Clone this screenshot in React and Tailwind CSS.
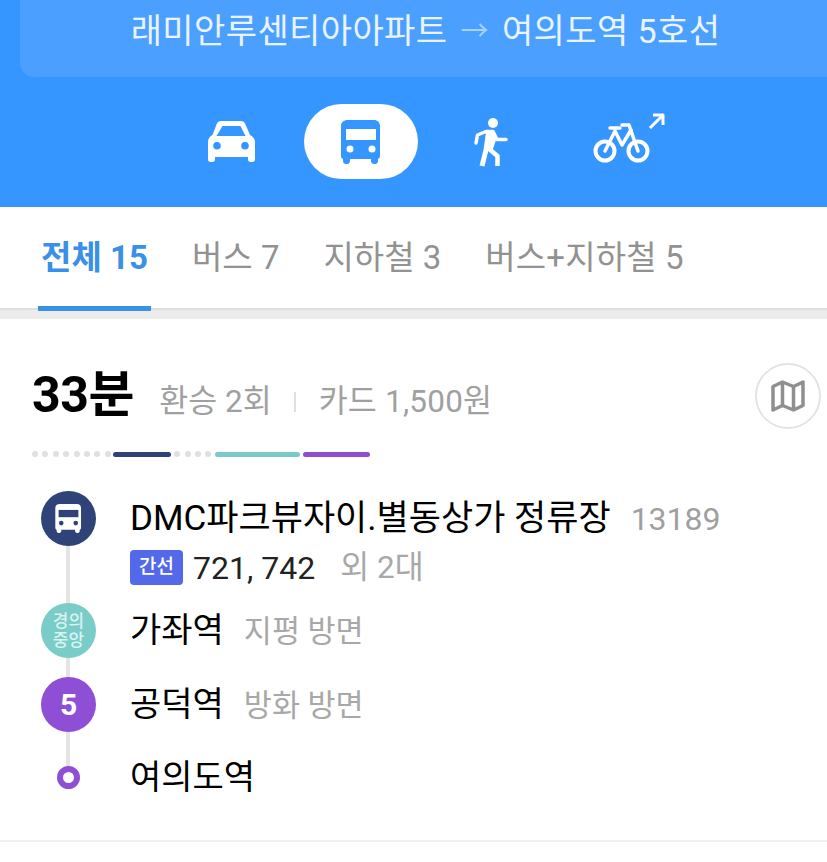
import React from "react";

function Car() {
  return (
    <svg width="48" height="41" viewBox="0 0 48 41" className="block">
      <path fillRule="evenodd" fill="#fff" d="M14 0h20c2 0 3.500 1 4.300 3l4.700 11c3 1.500 5 4 5 7v17c0 1.700-1 3-2.500 3h-2c-1.500 0-2.500-1.300-2.500-3v-2H8v2c0 1.700-1 3-2.500 3h-2C2 41 1 39.700 1 38V21c0-3 1.500-5.500 4.500-7L9.700 3C10.500 1 12 0 14 0zM15.500 5 9.500 15h29l-5-10zM10 21a3.800 3.800 0 1 0 0 7.600 3.800 3.800 0 0 0 0-7.600zM38 21a3.800 3.800 0 1 0 0 7.600 3.800 3.800 0 0 0 0-7.600z" />
    </svg>
  );
}
function Bus({ color = "#3596ff", hole = "#fff", w = 40, h = 44 }) {
  return (
    <svg width={w} height={h} viewBox="0 0 40 44" className="block">
      <path fill={color} d="M7 0h26c3.500 0 6 2.500 6 6v30c0 1.500-.7 2.500-2 3v2c0 1.500-1 3-3 3h-1c-2 0-3-1.500-3-3v-2H9v2c0 1.500-1 3-3 3H5c-2 0-3-1.500-3-3v-2c-1.300-.5-2-1.500-2-3V6c0-3.500 2.500-6 7-6z" />
      <rect x="5" y="9" width="30" height="11" fill={hole} />
      <circle cx="9" cy="29" r="3.500" fill={hole} />
      <circle cx="31" cy="29" r="3.500" fill={hole} />
    </svg>
  );
}
function Walk() {
  return (
    <svg width="36" height="50" viewBox="0 0 36 50" className="block" fill="none" stroke="#fff" strokeWidth="3.500" strokeLinejoin="round" strokeLinecap="round">
      <circle cx="20" cy="6" r="5" fill="#fff" stroke="none" />
      <path d="M3 26 4.500 18 13 14.500H20L24 22.500H33" />
      <path d="M15.500 16 13 33 9 49" strokeWidth="5" strokeLinecap="butt" />
      <path d="M15 31 24.500 39V49" strokeWidth="4.500" strokeLinecap="butt" />
      <path d="M13 15h8l2 8-3 9-8-1z" fill="#fff" stroke="none" />
    </svg>
  );
}
function Bike() {
  return (
    <svg width="72" height="52" viewBox="0 0 72 52" className="block" fill="none" stroke="#fff" strokeWidth="3.500" strokeLinecap="round" strokeLinejoin="round">
      <circle cx="12" cy="38" r="9.500" strokeWidth="4" />
      <circle cx="45" cy="38" r="9.500" strokeWidth="4" />
      <path d="M12 38 22 18 29 32 38 17" />
      <path d="M17 15h10" />
      <path d="M29 12h7L45 38" />
      <path d="M57 15 70 2M60 2h10v10" strokeWidth="3" strokeLinecap="butt" />
    </svg>
  );
}
function MapIcon() {
  return (
    <svg width="34" height="32" viewBox="0 0 34 32" className="block" fill="none" stroke="#8f8f8f" strokeWidth="3.500" strokeLinejoin="round">
      <path d="M2 6.500 11.500 2 22.500 6.500 32 2V25.500L22.500 30 11.500 25.500 2 30z" />
      <path d="M11.500 2V25.500M22.500 6.500V30" />
    </svg>
  );
}

const dots = (n) => Array.from({ length: n }, (_, i) => (
  <span key={i} className="w-[6px] h-[6px] rounded-full bg-[#e0e0e0] mr-[4.400px] shrink-0" />
));

export default function App() {
  return (
    <div className="w-[827px] h-[862px] overflow-hidden bg-white" style={{ fontFamily: "Roboto, 'Noto Sans CJK KR', sans-serif" }}>
      {/* header */}
      <div className="h-[207px] bg-[#3596ff] pl-[20px]">
        <div className="h-[77px] bg-[#4a9fff] rounded-bl-[14px] flex items-center justify-center pb-[14px] pl-[4px] text-[34px] tracking-[0.4px] text-[#eaf4ff]">
          <span>래미안루센티아아파트</span>
          <span className="mx-[13px] text-[28px] text-[#a9d0ff]">→</span>
          <span>여의도역 5호선</span>
        </div>
        <div className="flex items-center ml-[-20px] mt-[27px] h-[75px]">
          <div className="ml-[207px] w-[48px]"><Car /></div>
          <div className="ml-[49px] w-[114px] h-[75px] rounded-[38px] bg-white flex items-center justify-center"><Bus /></div>
          <div className="ml-[55px] w-[36px]"><Walk /></div>
          <div className="ml-[84px] mt-[-5px] w-[72px]"><Bike /></div>
        </div>
      </div>

      {/* tabs */}
      <div className="h-[101px] flex items-center pl-[38px] text-[33px] text-[#929292]">
        <span className="font-bold text-[#3a8fe6] w-[113px] text-center mr-[41px]">전체 15</span>
        <span className="mr-[44px]">버스 7</span>
        <span className="mr-[44px]">지하철 3</span>
        <span className="tracking-[0.15px]">버스+지하철 5</span>
      </div>
      <div className="h-[11px] bg-[#ececec] border-t-[2px] border-[#dedede] relative">
        <div className="absolute left-[38px] top-[-4px] w-[113px] h-[5px] bg-[#3a8fe6]" />
      </div>

      {/* card */}
      <div className="pl-[32px] pt-[44px]">
        <div className="flex items-center justify-between h-[66px] pr-[6px]">
          <div className="flex items-baseline mt-[-2px]">
            <span className="text-[50px] font-bold text-black tracking-[-0.4px]">33분</span>
            <span className="ml-[25px] text-[31.500px] text-[#a0a0a0]">환승 2회</span>
            <span className="mx-[22px] w-[2px] h-[20px] bg-[#e0e0e0]" />
            <span className="ml-[1px] text-[31.500px] tracking-[0.2px] text-[#a0a0a0]">카드 1,500원</span>
          </div>
          <div className="w-[66px] h-[66px] rounded-full border-2 border-[#e4e4e4] flex items-center justify-center"><MapIcon /></div>
        </div>
        <div className="flex items-center mt-[22px] h-[6px]">
          {dots(8)}
          <span className="w-[58px] h-[5px] rounded-full bg-[#2f4379] mr-[3px] ml-[-2px]" />
          {dots(4)}
          <span className="w-[85px] h-[5px] rounded-full bg-[#7cc9c9] mr-[3px] ml-[-1px]" />
          <span className="w-[67px] h-[5px] rounded-full bg-[#8e4fcf]" />
        </div>
      </div>

      {/* timeline */}
      <div className="relative pl-[41px] mt-[34px]">
        <div className="absolute left-[66px] top-[28px] w-[4px] h-[260px] bg-[#e4e4e4]" />
        <div className="relative flex h-[112px]">
          <div className="w-[55px] h-[55px] rounded-full bg-[#2f4379] flex items-center justify-center"><Bus color="#fff" hole="#2f4379" w={27} h={29} /></div>
          <div className="ml-[34px]">
            <div className="flex items-baseline h-[56px] pt-[2px]">
              <span className="text-[35px] text-black">DMC파크뷰자이.별동상가 정류장</span>
              <span className="ml-[20px] text-[32px] text-[#a0a0a0]">13189</span>
            </div>
            <div className="flex items-center h-[35px] mt-[3px]">
              <span className="w-[53px] h-[35px] rounded-[4px] bg-[#5468ea] text-white text-[19px] font-medium flex items-center justify-center">간선</span>
              <span className="ml-[10px] text-[32px] text-[#222]">721, 742</span>
              <span className="ml-[25px] text-[31.500px] text-[#a8a8a8]">외 2대</span>
            </div>
          </div>
        </div>
        <div className="relative flex h-[74px]">
          <div className="w-[55px] h-[55px] rounded-full bg-[#7accc9] text-[#d9f3f1] text-[17px] leading-[19px] font-medium flex items-center justify-center text-center">경의<br />중앙</div>
          <div className="ml-[34px] flex items-baseline h-[55px] pt-[2px]">
            <span className="text-[34px] text-black">가좌역</span>
            <span className="ml-[20px] text-[30.500px] text-[#a8a8a8]">지평 방면</span>
          </div>
        </div>
        <div className="relative flex h-[89px]">
          <div className="w-[55px] h-[55px] rounded-full bg-[#8e4fd6] text-white text-[30px] font-bold flex items-center justify-center">5</div>
          <div className="ml-[34px] flex items-baseline h-[55px] pt-[2px]">
            <span className="text-[34px] text-black">공덕역</span>
            <span className="ml-[20px] text-[30.500px] text-[#a8a8a8]">방화 방면</span>
          </div>
        </div>
        <div className="relative flex h-[74px] items-start">
          <div className="w-[55px] flex justify-center"><div className="w-[23px] h-[23px] rounded-full border-[6.500px] border-[#8e4fd6] bg-white" /></div>
          <div className="ml-[34px] mt-[-14px] text-[34px] text-black">여의도역</div>
        </div>
      </div>
      <div className="h-[2px] bg-[#f0f0f0]" />
    </div>
  );
}
